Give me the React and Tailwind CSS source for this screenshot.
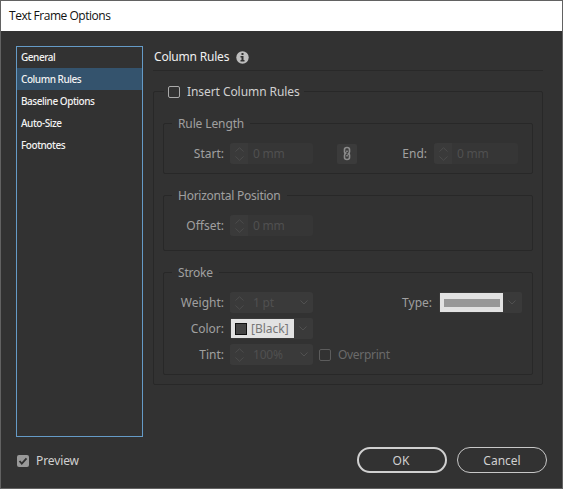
import React from 'react';

function Group({ title, className, legendClass, children }) {
  return (
    <fieldset className={`min-w-0 rounded-[2px] border border-[#282828] ${className}`}>
      <legend className={`flex h-[17px] items-center whitespace-nowrap ${legendClass}`}>{title}</legend>
      {children}
    </fieldset>
  );
}

function Chevron() {
  return (
    <svg width="8" height="5" viewBox="0 0 8 5" fill="none" stroke="#505050" strokeWidth="1">
      <path d="M.5 .5 4 4 7.500 .5" />
    </svg>
  );
}

function Stepper() {
  return (
    <span className="flex h-full w-[18px] shrink-0 items-center justify-center rounded-l-[3px] bg-[#3a3a3a]">
      <svg width="9" height="14" viewBox="0 0 9 14" fill="none" stroke="#4c4c4c" strokeWidth="1">
        <path d="M.5 4.500 4.500 .8 8.500 4.500M.5 9.500 4.500 13.200 8.500 9.500" />
      </svg>
    </span>
  );
}

function Field({ value, dropdown, className = 'w-[83px]' }) {
  return (
    <div className={`flex h-[21px] shrink-0 items-center rounded-[3px] ${dropdown ? 'bg-[#3a3a3a]' : 'bg-[#363636]'} ${className}`}>
      <Stepper />
      <span className="ml-[5px] flex-1 tracking-[-0.2px] text-[#505050]">{value}</span>
      {dropdown && <span className="mr-[5px]"><Chevron /></span>}
    </div>
  );
}

function Label({ children, className = 'w-[60px]' }) {
  return <span className={`shrink-0 text-right ${className}`}>{children}</span>;
}

const pages = ['General', 'Column Rules', 'Baseline Options', 'Auto-Size', 'Footnotes'];

export default function App() {
  return (
    <div className="flex h-[489px] w-[563px] flex-col overflow-hidden border border-[#626262] bg-[#323232] font-['Noto_Sans',sans-serif] text-[12px] leading-[16px] text-[#a0a0a0]">
      <header className="flex h-[30px] shrink-0 items-center bg-white pl-[8px] font-['Open_Sans','Noto_Sans',sans-serif] text-[12px] tracking-[-0.48px] text-[#111]">
        Text Frame Options
      </header>
      <div className="flex h-[406px] shrink-0 pl-[15px] pt-[15px]">
        <nav className="flex h-[391px] w-[127px] shrink-0 flex-col border border-[#659bc7] text-[10px] font-medium tracking-[-0.45px] text-[#f2f2f2]">
          {pages.map((p, i) => (
            <div key={p} className={`flex items-center pl-[4px] ${i === 0 ? 'h-[21px] pb-[2px]' : 'h-[22px]'} ${i === 1 ? 'bg-[#34536d]' : ''}`}>{p}</div>
          ))}
        </nav>
        <main className="ml-[10px] w-[390px]">
          <div className="flex h-[25px] items-center border-b border-[#292929] pb-[2px] pl-[1px] tracking-[-0.2px] text-[#f0f0f0]">
            <h1>Column Rules</h1>
            <svg className="ml-[7px]" width="13" height="13" viewBox="0 0 13 13">
              <circle cx="6.500" cy="6.500" r="6.200" fill="#bdbdbd" />
              <path d="M5.500 2h2v2h-2zM4.500 5h3v4h1v1.500h-4V9h1V6.500h-1z" fill="#303030" />
            </svg>
          </div>
          <Group
            className="mt-[12px] h-[302px] px-[9px]"
            legendClass="ml-[1px] px-[4px] tracking-[-0.07px] text-[#d0d0d0]"
            title={<><span className="mr-[7px] h-[12px] w-[12px] rounded-[2px] border border-[#aaa]" /><span>Insert Column Rules</span></>}
          >
            <Group className="mt-[15px] h-[59px]" legendClass="ml-[8px] px-[6px] tracking-[-0.12px]" title="Rule Length">
              <div className="mt-[11px] flex h-[21px] items-center">
                <Label>Start:</Label>
                <Field value="0 mm" className="ml-[6px] w-[83px]" />
                <span className="ml-[24px] flex h-[20px] w-[20px] items-center justify-center rounded-[2px] bg-[#3b3b3b]">
                  <svg width="8" height="15" viewBox="0 0 8 15" fill="none" stroke="#8c8c8c" strokeWidth="1.600">
                    <path d="M2.800 8Q1.500 7.500 1.500 6V3.500Q1.500 1.500 4 1.500T6.500 3.500V6Q6.500 7.500 4.500 8.500M5.200 7Q6.500 7.500 6.500 9v2.500q0 2-2.500 2t-2.500-2V9.500Q1.500 7.500 3.500 6.500M4 4.500v1.500M4 9v1.500" />
                  </svg>
                </span>
                <Label className="w-[70px]">End:</Label>
                <Field value="0 mm" className="ml-[7px] w-[84px]" />
              </div>
            </Group>
            <Group className="mt-[13px] h-[64px]" legendClass="ml-[8px] px-[6px] tracking-[-0.25px]" title="Horizontal Position">
              <div className="mt-[11px] flex h-[21px] items-center">
                <Label>Offset:</Label>
                <Field value="0 mm" className="ml-[6px] w-[83px]" />
              </div>
            </Group>
            <Group className="mt-[13px] h-[111px]" legendClass="ml-[8px] px-[6px] tracking-[-0.2px]" title="Stroke">
              <div className="mt-[11px] flex flex-col gap-[5px]">
                <div className="flex h-[21px] items-center">
                  <Label>Weight:</Label>
                  <Field value="1 pt" dropdown className="ml-[6px] w-[83px]" />
                  <Label className="w-[119px]">Type:</Label>
                  <div className="ml-[7px] flex h-[21px] w-[83px] items-center rounded-[2px] bg-[#3a3a3a] pl-[1px]">
                    <span className="flex h-[19px] w-[63px] items-center justify-center bg-[#e2e2e2]">
                      <span className="h-[8px] w-[56px] bg-[#989898]" />
                    </span>
                    <span className="ml-[5px]"><Chevron /></span>
                  </div>
                </div>
                <div className="flex h-[21px] items-center">
                  <Label>Color:</Label>
                  <div className="ml-[6px] flex h-[21px] w-[83px] items-center rounded-[2px] bg-[#3a3a3a] pl-[1px]">
                    <span className="flex h-[19px] w-[63px] items-center bg-[#e2e2e2] pl-[4px] text-[#777]">
                      <span className="mr-[4px] h-[12px] w-[12px] border border-[#111] bg-[#454545]" />
                      [Black]
                    </span>
                    <span className="ml-[5px]"><Chevron /></span>
                  </div>
                </div>
                <div className="flex h-[21px] items-center">
                  <Label>Tint:</Label>
                  <Field value="100%" dropdown className="ml-[6px] w-[83px]" />
                  <span className="ml-[6px] h-[12px] w-[12px] rounded-[2px] border border-[#5c5c5c]" />
                  <span className="ml-[7px] tracking-[-0.3px] text-[#6a6a6a]">Overprint</span>
                </div>
              </div>
            </Group>
          </Group>
        </main>
      </div>
      <footer className="flex h-[51px] items-start pl-[16px] pt-[10px]">
        <label className="flex h-[27px] items-center gap-[7px] text-[#d0d0d0]">
          <svg width="12" height="12" viewBox="0 0 12 12">
            <rect width="12" height="12" rx="2" fill="#999" />
            <path d="m2.500 6 2.300 2.700L9.500 3.300" fill="none" stroke="#303030" strokeWidth="1.800" />
          </svg>
          <span className="pt-[1px] tracking-[-0.1px]">Preview</span>
        </label>
        <button className="ml-auto h-[26px] w-[90px] rounded-full border-2 border-[#d0d0d0] pr-[2px] pt-[2px] text-[#d0d0d0]">OK</button>
        <button className="ml-[10px] mr-[15px] h-[26px] w-[90px] rounded-full border border-[#c8c8c8] pt-[2px] text-[#d0d0d0]">Cancel</button>
      </footer>
    </div>
  );
}
